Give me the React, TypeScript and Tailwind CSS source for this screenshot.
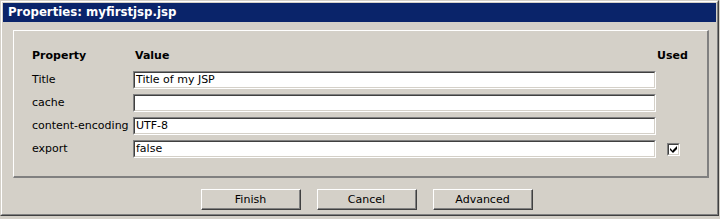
import React from 'react';

const rows = [
  { name: 'Title', value: 'Title of my JSP', used: false },
  { name: 'cache', value: '', used: false },
  { name: 'content-encoding', value: 'UTF-8', used: false },
  { name: 'export', value: 'false', used: true },
];

function Field({ value }: { value: string }) {
  return (
    <div className="h-[18px] border-t border-l border-[#808080] border-b border-r border-b-white border-r-white">
      <div className="h-full bg-white border-t border-l border-[#404040] border-b border-r border-b-[#d4d0c8] border-r-[#d4d0c8] pl-[1px] leading-[14px]">
        {value}
      </div>
    </div>
  );
}

function Check({ checked }: { checked: boolean }) {
  return (
    <div className="w-[13px] h-[13px] border-t border-l border-[#808080] border-b border-r border-b-white border-r-white">
      <div className="w-full h-full bg-white border-t border-l border-[#404040] border-b border-r border-b-[#d4d0c8] border-r-[#d4d0c8]">
        {checked && (
          <svg width="9" height="9" viewBox="0 0 9 9">
            <path d="M1 4h1v1h1v1h1V5h1V4h1V3h1V2h1v3H7v1H6v1H5v1H4V8H3V7H2V6H1z" fill="#000" transform="translate(0,-0.5)" />
          </svg>
        )}
      </div>
    </div>
  );
}

function Button({ label }: { label: string }) {
  return (
    <div className="w-[100px] h-[21px] border-t border-l border-white border-b border-r border-b-[#404040] border-r-[#404040]">
      <div className="w-full h-full flex items-center justify-center border-b border-r border-[#808080] pt-[2px]">
        {label}
      </div>
    </div>
  );
}

export default function App() {
  return (
    <div
      className="w-[720px] h-[219px] bg-[#d4d0c8] text-[11px] text-black"
      style={{ fontFamily: '"DejaVu Sans", Tahoma, sans-serif' }}
    >
      <div className="w-[719px] h-[216px] border-t border-l border-[#d4d0c8] border-b border-r border-b-[#404040] border-r-[#404040]">
        <div className="h-full border-t border-l border-white border-b border-r border-b-[#808080] border-r-[#808080] p-[1px] flex flex-col">
          <div className="h-[19px] bg-[#0a246a] text-white font-bold text-[11.75px] leading-[19px] pl-[5px]">
            Properties: myfirstjsp.jsp
          </div>
          <div className="mt-[8px] ml-[10px] mr-[7px] h-[148px] border-t border-l border-white border-b-2 border-r-2 border-b-[#808080] border-r-[#808080] pl-[18px] pt-[16px]">
            <div className="grid grid-cols-[101px_523px_1fr] items-center">
              <div className="font-bold h-[18px] leading-[18px]">Property</div>
              <div className="font-bold h-[18px] leading-[18px] pl-[2px]">Value</div>
              <div className="font-bold h-[18px] leading-[18px] pl-[1px]">Used</div>
            </div>
            <div className="mt-[6px] flex flex-col gap-[5px]">
              {rows.map((r) => (
                <div key={r.name} className="grid grid-cols-[101px_523px_1fr] items-center">
                  <div className="leading-[18px] whitespace-nowrap">{r.name}</div>
                  <Field value={r.value} />
                  <div className="pl-[11px]">
                    {r.used && <Check checked />}
                  </div>
                </div>
              ))}
            </div>
          </div>
          <div className="mt-[11px] pl-[198px] flex gap-[16px]">
            <Button label="Finish" />
            <Button label="Cancel" />
            <Button label="Advanced" />
          </div>
        </div>
      </div>
    </div>
  );
}
